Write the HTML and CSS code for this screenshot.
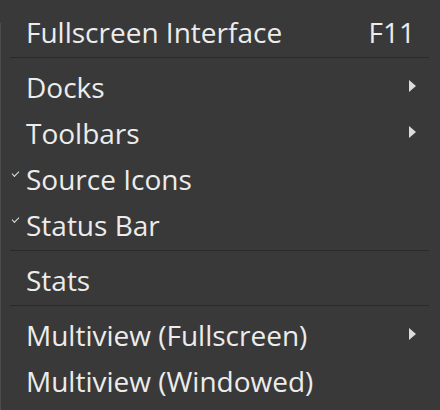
FILE: index.html
```html
<!DOCTYPE html>
<html lang="en">
<head>
  <meta charset="UTF-8">
  <title>View menu</title>
  <link rel="stylesheet" href="styles.css">
</head>
<body>
  <!-- 视图菜单 -->
  <ul class="menu">
    <li class="item"><span class="label">Fullscreen Interface</span><span class="shortcut">F11</span></li>
    <li class="sep"></li>
    <li class="item sub"><span class="label">Docks</span></li>
    <li class="item sub"><span class="label">Toolbars</span></li>
    <li class="item checked"><span class="label">Source Icons</span></li>
    <li class="item checked"><span class="label">Status Bar</span></li>
    <li class="sep"></li>
    <li class="item"><span class="label">Stats</span></li>
    <li class="sep"></li>
    <li class="item sub"><span class="label">Multiview (Fullscreen)</span></li>
    <li class="item"><span class="label">Multiview (Windowed)</span></li>
  </ul>
</body>
</html>
```

FILE: styles.css
```css
html, body { margin: 0; height: 100%; background: #393939; }
body { font-family: 'Open Sans', 'Noto Sans', Arial, sans-serif; color: #ececec; }
.menu { list-style: none; margin: 0; padding: 9px 0 0 0; height: 100%; box-sizing: border-box; border-left: 1px solid; border-image: linear-gradient(to bottom, transparent 24px, #4c4c4c 24px) 1; }
.item { position: relative; display: flex; align-items: center; height: 46px; padding: 0 25px 0 25px; font-size: 28px; }
.label { flex: 1; white-space: nowrap; }
.sep { height: 1px; background: #2a2a2a; margin: 2px 11px 6px 9px; }
.sub::after { content: ''; position: absolute; right: 24px; top: 16px; border-left: 7px solid #dcdcdc; border-top: 6.5px solid transparent; border-bottom: 6.5px solid transparent; }
.checked::before { content: ''; position: absolute; left: 11px; top: 15px; width: 6px; height: 3px; border-left: 1.5px solid #e0e0e0; border-bottom: 1.5px solid #e0e0e0; transform: rotate(-45deg); }
```
